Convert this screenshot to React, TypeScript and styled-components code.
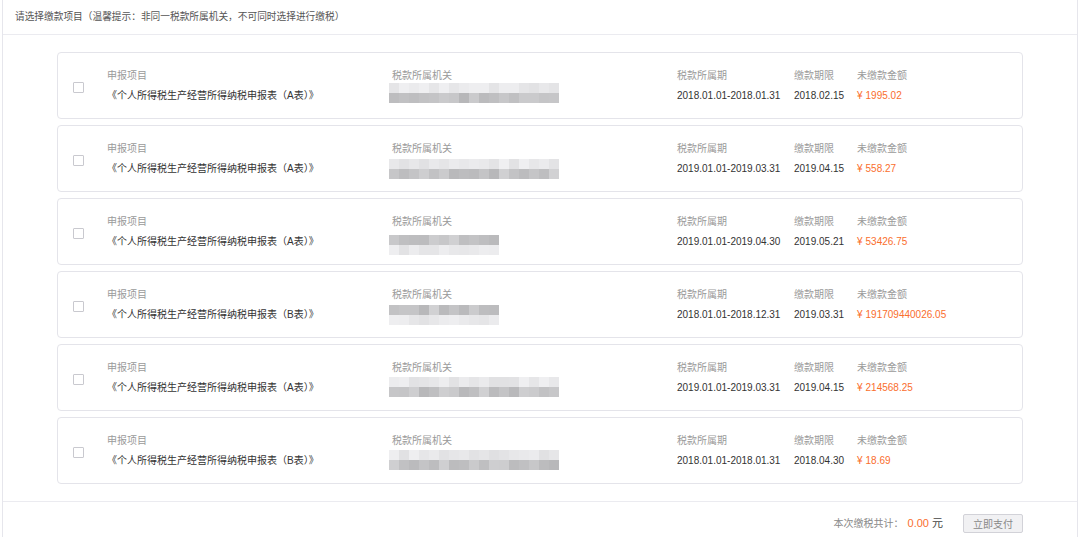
import styled, { createGlobalStyle } from "styled-components";

const GlobalStyle = createGlobalStyle`
  html, body {
    margin: 0;
    padding: 0;
    background: #fff;
  }
  body {
    font-family: "Liberation Sans", "Noto Sans CJK SC", sans-serif;
    font-size: 10px;
  }
`;

const Panel = styled.div`
  margin: 0 2px;
  height: 537px;
  border-left: 1px solid #e6e6ec;
  border-right: 1px solid #e6e6ec;
  display: flex;
  flex-direction: column;
  box-sizing: border-box;
`;

const TopBar = styled.header`
  height: 34px;
  line-height: 34px;
  padding-left: 12px;
  font-size: 9.7px;
  color: #555;
  border-bottom: 1px solid #ebebf0;
`;

const List = styled.section`
  display: flex;
  flex-direction: column;
  gap: 6px;
  padding: 17px 54px 17px 54px;
`;

const Card = styled.div`
  height: 67px;
  box-sizing: border-box;
  border: 1px solid #e4e4ea;
  border-radius: 4px;
  display: grid;
  grid-template-columns: 34px 285px 285px 117px 63px 1fr;
  align-items: start;
  padding: 13px 0 0 15px;
`;

const Check = styled.span`
  width: 9px;
  height: 9px;
  border: 1px solid #c9c9cf;
  border-radius: 1px;
  background: #fff;
  margin-top: 16px;
`;

const Cell = styled.div`
  display: flex;
  flex-direction: column;
  line-height: 20px;
  white-space: nowrap;
`;

const Label = styled.span`
  color: #9a9a9a;
`;

const Value = styled.span<{ $accent?: boolean }>`
  color: ${(p) => (p.$accent ? "#fa6e2d" : "#333")};
`;

const Yen = styled.span`
  margin-right: 3px;
`;

const Mosaic = styled.div<{ $offset: number }>`
  display: grid;
  grid-auto-flow: column;
  grid-template-rows: 10px 10px;
  margin: ${(p) => p.$offset}px 0 0 -3px;
  width: max-content;
`;

const Pixel = styled.span`
  width: 10px;
  height: 10px;
`;

const Footer = styled.footer`
  flex: 1;
  border-top: 1px solid #ebebf0;
  display: flex;
  justify-content: flex-end;
  align-items: flex-start;
  padding: 12px 54px 0 0;
  gap: 20px;
`;

const Total = styled.div`
  color: #888;
  line-height: 19px;
  display: flex;
  align-items: baseline;
`;

const Sum = styled.span`
  color: #fa6e2d;
  font-size: 11px;
  margin: 0 3px 0 4px;
`;

const Unit = styled.span`
  color: #444;
  font-size: 11px;
`;

const PayButton = styled.button`
  width: 60px;
  height: 19px;
  padding: 0;
  border: 1px solid #d2d2d8;
  border-radius: 2px;
  background: #f1f1f3;
  color: #888;
  font-family: inherit;
  font-size: 10px;
`;

type Row = {
  form: string;
  period: string;
  due: string;
  amount: string;
  cells: number;
  offset: number;
  darkTop: boolean;
  seed: number;
};

const rows: Row[] = [
  { form: "A", period: "2018.01.01-2018.01.31", due: "2018.02.15", amount: "1995.02", cells: 17, offset: -3, darkTop: false, seed: 3 },
  { form: "A", period: "2019.01.01-2019.03.31", due: "2019.04.15", amount: "558.27", cells: 17, offset: 0, darkTop: false, seed: 7 },
  { form: "A", period: "2019.01.01-2019.04.30", due: "2019.05.21", amount: "53426.75", cells: 11, offset: 3, darkTop: true, seed: 11 },
  { form: "B", period: "2018.01.01-2018.12.31", due: "2019.03.31", amount: "191709440026.05", cells: 11, offset: 0, darkTop: true, seed: 5 },
  { form: "A", period: "2019.01.01-2019.03.31", due: "2019.04.15", amount: "214568.25", cells: 17, offset: -1, darkTop: false, seed: 13 },
  { form: "B", period: "2018.01.01-2018.01.31", due: "2018.04.30", amount: "18.69", cells: 17, offset: -1, darkTop: false, seed: 17 },
];

// stand-in for the pixelated (redacted) tax office name
function shades(n: number, seed: number, darkTop: boolean) {
  const out: string[] = [];
  let s = seed;
  for (let i = 0; i < n; i++) {
    for (let r = 0; r < 2; r++) {
      s = (s * 9301 + 49297) % 233280;
      const rnd = s / 233280;
      const dark = (r === 0) === darkTop;
      const base = dark ? 196 : 232;
      const v = Math.round(base + (rnd - 0.5) * (dark ? 26 : 16));
      out.push(`rgb(${v},${v},${v + 2})`);
    }
  }
  return out;
}

export default function App() {
  return (
    <>
      <GlobalStyle />
      <Panel>
        <TopBar>请选择缴款项目（温馨提示：非同一税款所属机关，不可同时选择进行缴税）</TopBar>
        <List>
          {rows.map((r, i) => (
            <Card key={i}>
              <Check />
              <Cell>
                <Label>申报项目</Label>
                <Value>《个人所得税生产经营所得纳税申报表（{r.form}表）》</Value>
              </Cell>
              <Cell>
                <Label>税款所属机关</Label>
                <Mosaic $offset={r.offset}>
                  {shades(r.cells, r.seed, r.darkTop).map((c, j) => (
                    <Pixel key={j} style={{ background: c }} />
                  ))}
                </Mosaic>
              </Cell>
              <Cell>
                <Label>税款所属期</Label>
                <Value>{r.period}</Value>
              </Cell>
              <Cell>
                <Label>缴款期限</Label>
                <Value>{r.due}</Value>
              </Cell>
              <Cell>
                <Label>未缴款金额</Label>
                <Value $accent>
                  <Yen>¥</Yen>
                  {r.amount}
                </Value>
              </Cell>
            </Card>
          ))}
        </List>
        <Footer>
          <Total>
            本次缴税共计：<Sum>0.00</Sum>
            <Unit>元</Unit>
          </Total>
          <PayButton>立即支付</PayButton>
        </Footer>
      </Panel>
    </>
  );
}
